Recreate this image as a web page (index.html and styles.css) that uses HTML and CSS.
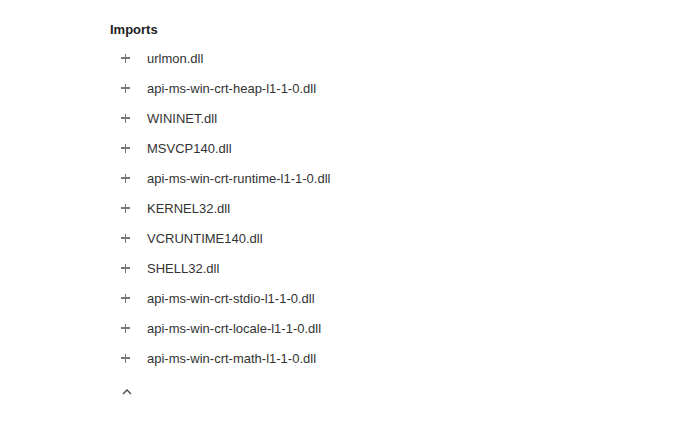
FILE: index.html
```html
<!DOCTYPE html>
<html>
<head>
<meta charset="utf-8">
<link rel="stylesheet" href="styles.css">
</head>
<body>
<section class="imports">
  <h2 class="title">Imports</h2>
  <ul class="list">
    <li class="row"><span class="plus"></span><span class="name">urlmon.dll</span></li>
    <li class="row"><span class="plus"></span><span class="name">api-ms-win-crt-heap-l1-1-0.dll</span></li>
    <li class="row"><span class="plus"></span><span class="name">WININET.dll</span></li>
    <li class="row"><span class="plus"></span><span class="name">MSVCP140.dll</span></li>
    <li class="row"><span class="plus"></span><span class="name">api-ms-win-crt-runtime-l1-1-0.dll</span></li>
    <li class="row"><span class="plus"></span><span class="name">KERNEL32.dll</span></li>
    <li class="row"><span class="plus"></span><span class="name">VCRUNTIME140.dll</span></li>
    <li class="row"><span class="plus"></span><span class="name">SHELL32.dll</span></li>
    <li class="row"><span class="plus"></span><span class="name">api-ms-win-crt-stdio-l1-1-0.dll</span></li>
    <li class="row"><span class="plus"></span><span class="name">api-ms-win-crt-locale-l1-1-0.dll</span></li>
    <li class="row"><span class="plus"></span><span class="name">api-ms-win-crt-math-l1-1-0.dll</span></li>
  </ul>
  <div class="collapse">
    <svg width="10" height="6" viewBox="0 0 10 6"><path d="M1 5 L5 1 L9 5" fill="none" stroke="#444" stroke-width="1.3"/></svg>
  </div>
</section>
</body>
</html>
```

FILE: styles.css
```css
html, body {
  margin: 0;
  padding: 0;
  background: #fff;
}
body {
  font-family: "Liberation Sans", Arial, sans-serif;
  color: #333;
}
.imports {
  padding: 22px 0 0 110px;
}
.title {
  margin: 0;
  font-size: 13px;
  line-height: 16px;
  font-weight: bold;
  color: #222;
}
.list {
  list-style: none;
  margin: 5px 0 0 0;
  padding: 0;
}
.row {
  display: flex;
  align-items: center;
  height: 30px;
  font-size: 13px;
}
.plus {
  position: relative;
  width: 9px;
  height: 9px;
  margin-left: 11px;
  margin-right: 17px;
}
.plus::before, .plus::after {
  content: "";
  position: absolute;
  background: #777;
}
.plus::before {
  left: 0;
  top: 3.75px;
  width: 9px;
  height: 1.5px;
}
.plus::after {
  left: 3.75px;
  top: 0;
  width: 1.5px;
  height: 9px;
}
.name {
  color: #333;
}
.collapse {
  display: flex;
  margin: 16px 0 0 12px;
  height: 10px;
}
```
